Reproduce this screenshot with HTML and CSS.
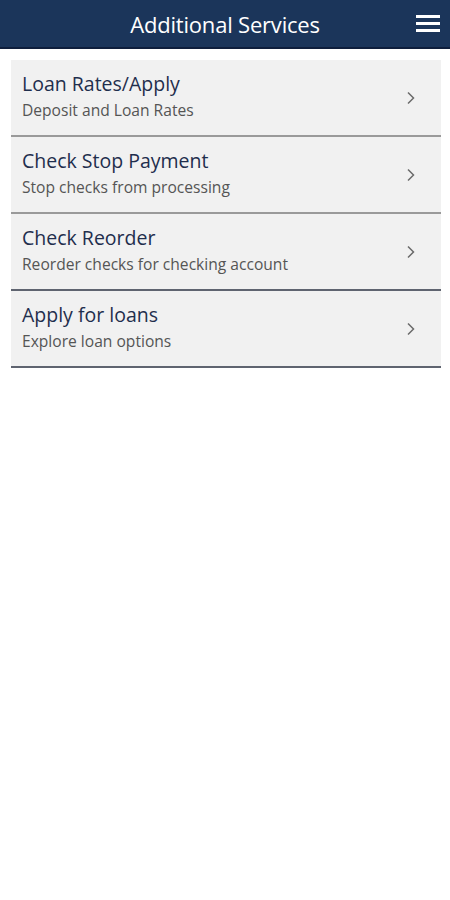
FILE: index.html
```html
<!DOCTYPE html>
<html>
<head>
    <title>Additional Services</title>
    <meta charset="UTF-8">
    <meta name="viewport" content="width=device-width, initial-scale=1.0">
    <link rel="stylesheet" href="styles.css">
</head>
<body>
    <div class="top-bar">
        <h1>Additional Services</h1>
        <button class="menu-btn" aria-label="Menu">
            <span></span><span></span><span></span>
        </button>
    </div>

    <div class="service-list">
        <a class="service-item" href="#">
            <div class="service-text">
                <div class="service-title">Loan Rates/Apply</div>
                <div class="service-sub">Deposit and Loan Rates</div>
            </div>
            <svg class="chevron" width="10" height="14" viewBox="0 0 10 14"><path d="M2 1.5 L7.5 7 L2 12.5" fill="none" stroke="#6b6b6b" stroke-width="1.5"/></svg>
        </a>
        <a class="service-item" href="#">
            <div class="service-text">
                <div class="service-title">Check Stop Payment</div>
                <div class="service-sub">Stop checks from processing</div>
            </div>
            <svg class="chevron" width="10" height="14" viewBox="0 0 10 14"><path d="M2 1.5 L7.5 7 L2 12.5" fill="none" stroke="#6b6b6b" stroke-width="1.5"/></svg>
        </a>
        <a class="service-item dark" href="#">
            <div class="service-text">
                <div class="service-title">Check Reorder</div>
                <div class="service-sub">Reorder checks for checking account</div>
            </div>
            <svg class="chevron" width="10" height="14" viewBox="0 0 10 14"><path d="M2 1.5 L7.5 7 L2 12.5" fill="none" stroke="#6b6b6b" stroke-width="1.5"/></svg>
        </a>
        <a class="service-item dark" href="#">
            <div class="service-text">
                <div class="service-title">Apply for loans</div>
                <div class="service-sub">Explore loan options</div>
            </div>
            <svg class="chevron" width="10" height="14" viewBox="0 0 10 14"><path d="M2 1.5 L7.5 7 L2 12.5" fill="none" stroke="#6b6b6b" stroke-width="1.5"/></svg>
        </a>
    </div>
</body>
</html>
```

FILE: styles.css
```css
body {
    font-family: 'Open Sans', sans-serif;
    background-color: #ffffff;
    margin: 0;
    padding: 0;
}
.top-bar {
    position: relative;
    height: 47px;
    background-color: #1b355a;
    border-bottom: 2px solid #0e1e3c;
    display: flex;
    justify-content: center;
    align-items: center;
}
.top-bar h1 {
    margin: 0;
    color: #ffffff;
    font-size: 22px;
    font-weight: 400;
    letter-spacing: -0.2px;
}
.menu-btn {
    position: absolute;
    right: 10px;
    top: 15px;
    width: 24px;
    padding: 0;
    background: none;
    border: none;
    display: flex;
    flex-direction: column;
    gap: 4px;
}
.menu-btn span {
    display: block;
    height: 3px;
    background-color: #ffffff;
}
.service-list {
    margin: 11px 9px 0 11px;
    display: flex;
    flex-direction: column;
}
.service-item {
    display: flex;
    align-items: center;
    height: 75px;
    padding: 0 25px 0 11px;
    background-color: #f1f1f1;
    border-bottom: 2px solid #9a9a9a;
    text-decoration: none;
}
.service-item.dark {
    border-bottom-color: #5f6470;
}
.service-text {
    flex: 1;
    margin-top: -4px;
}
.service-title {
    color: #1f2e4d;
    font-size: 19.5px;
    line-height: 26px;
}
.service-sub {
    margin-top: 2px;
    color: #555555;
    font-size: 15.6px;
    line-height: 22px;
}
.chevron {
    flex-shrink: 0;
}
```
